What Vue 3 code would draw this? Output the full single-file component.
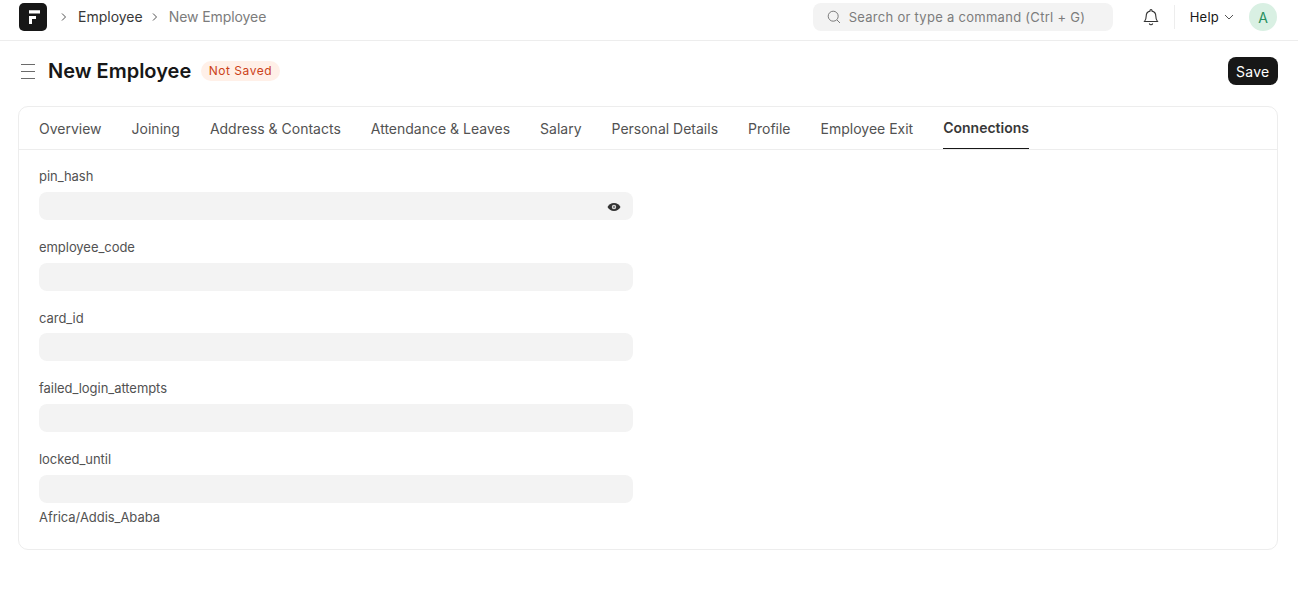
<script setup>
const tabs = ['Overview','Joining','Address & Contacts','Attendance & Leaves','Salary','Personal Details','Profile','Employee Exit','Connections']
const fields = [
  { label: 'pin_hash', eye: true },
  { label: 'employee_code' },
  { label: 'card_id' },
  { label: 'failed_login_attempts' },
  { label: 'locked_until', note: 'Africa/Addis_Ababa' },
]
</script>

<template>
  <div class="page">
    <header class="nav">
      <div class="logo">
        <svg width="16" height="16" viewBox="0 0 16 16"><path d="M4 1.300h11v3.300H4zM4 7h7v3H7v5H4z" fill="#fff"/></svg>
      </div>
      <svg class="chev first" width="8" height="10" viewBox="0 0 8 10"><path d="M2 1.500 5.500 5 2 8.500" fill="none" stroke="#525252" stroke-width="1"/></svg>
      <span class="crumb">Employee</span>
      <svg class="chev" width="8" height="10" viewBox="0 0 8 10"><path d="M2 1.500 5.500 5 2 8.500" fill="none" stroke="#525252" stroke-width="1"/></svg>
      <span class="crumb cur">New Employee</span>
      <div class="search">
        <svg width="14" height="14" viewBox="0 0 14 14"><circle cx="6.200" cy="6.200" r="5" fill="none" stroke="#7c7c7c"/><path d="m10 10 3 3" stroke="#7c7c7c"/></svg>
        <span>Search or type a command (Ctrl + G)</span>
      </div>
      <svg class="bell" width="16" height="18" viewBox="0 0 16 18"><path d="M8 1.500a1 1 0 0 1 1 1v.6c2.300.5 3.800 2.400 3.800 4.900 0 3 .7 4.300 1.700 5.500H1.500c1-1.200 1.700-2.500 1.700-5.500 0-2.500 1.500-4.400 3.800-4.900v-.6a1 1 0 0 1 1-1Z" fill="none" stroke="#333" stroke-width="1.100"/><path d="M6.300 15.500a1.800 1.800 0 0 0 3.400 0" fill="none" stroke="#333" stroke-width="1.100"/></svg>
      <div class="sep"></div>
      <span class="help">Help</span>
      <svg class="helpchev" width="10" height="6" viewBox="0 0 10 6"><path d="m1 1 4 4 4-4" fill="none" stroke="#555"/></svg>
      <div class="avatar">A</div>
    </header>

    <div class="head">
      <svg class="menu" width="16" height="16" viewBox="0 0 16 16"><path d="M1 1.500h14M1 8.500h14M1 15.500h14" stroke="#6b6b6b" stroke-width="1.200"/></svg>
      <h1>New Employee</h1>
      <span class="badge">Not Saved</span>
      <button class="save">Save</button>
    </div>

    <section class="card">
      <nav class="tabs">
        <span v-for="t in tabs" :key="t" class="tab" :class="{ on: t === 'Connections' }">{{ t }}</span>
      </nav>
      <div class="form">
        <div v-for="f in fields" :key="f.label" class="field">
          <label>{{ f.label }}</label>
          <div class="input">
            <svg v-if="f.eye" class="eye" width="14" height="14" viewBox="0 0 14 14"><path d="M7 3C4 3 1.500 5 .5 7c1 2 3.500 4 6.500 4s5.500-2 6.500-4c-1-2-3.500-4-6.500-4Z" fill="#333"/><circle cx="7" cy="7" r="2.200" fill="#ddd"/><circle cx="7" cy="7" r="1.200" fill="#888"/></svg>
          </div>
          <div v-if="f.note" class="note">{{ f.note }}</div>
        </div>
      </div>
    </section>
  </div>
</template>

<style>
html, body { margin: 0; background: #fff; }
</style>

<style scoped>
.page { width: 1298px; height: 602px; overflow: hidden; font-family: Inter, sans-serif; color: #171717; background: #fff; }
.nav { height: 34px; padding: 0 0 6px 19px; border-bottom: 1px solid #ededed; display: flex; align-items: center; box-sizing: content-box; }
.logo { width: 28px; height: 28px; border-radius: 5px; background: #171717; display: flex; align-items: center; justify-content: center; }
.chev { margin: 0 9px 0 8px; }
.chev.first { margin: 0 10px 0 13px; }
.crumb { font-size: 14px; color: #383838; padding-bottom: 1px; }
.crumb.cur { color: #7c7c7c; margin-left: 1px; letter-spacing: -.08px; }
.search { margin-left: auto; width: 300px; height: 28px; box-sizing: border-box; background: #f3f3f3; border-radius: 8px; display: flex; align-items: center; gap: 8px; padding-left: 14px; font-size: 13px; color: #7c7c7c; letter-spacing: .28px; }
.bell { margin-left: 30px; }
.sep { width: 1px; height: 24px; background: #ededed; margin-left: 15px; }
.help { font-size: 13px; margin-left: 15px; color: #171717; letter-spacing: .25px; }
.helpchev { margin-left: 5px; }
.avatar { width: 28px; height: 28px; border-radius: 50%; background: #d9f0e3; color: #278f5e; font-size: 14px; display: flex; align-items: center; justify-content: center; margin-left: 15px; margin-right: 21px; }
.head { height: 60px; display: flex; align-items: center; padding: 0 20px 0 20px; }
.menu { margin-right: 12px; }
h1 { margin: 0; font-size: 20px; font-weight: 600; line-height: 28px; }
.badge { margin-left: 10px; height: 20px; line-height: 20px; padding: 0 7.500px; border-radius: 10px; background: #fff0e8; color: #cc4218; font-size: 12px; letter-spacing: .52px; }
.save { margin-left: auto; height: 28px; padding: 0 8.500px; border: 0; border-radius: 8px; background: #171717; color: #fff; font: 14px Inter, sans-serif; letter-spacing: .25px; }
.card { margin: 5px 20px 0 18px; height: 444px; box-sizing: border-box; border: 1px solid #ededed; border-radius: 10px; }
.tabs { height: 42px; display: flex; gap: 30px; padding-left: 20px; border-bottom: 1px solid #ededed; }
.tab { font-size: 14px; line-height: 44px; color: #525252; height: 42px; box-sizing: border-box; }
.tab.on { font-weight: 600; color: #383838; line-height: 42px; border-bottom: 1px solid #171717; }
.form { padding: 18.300px 0 0 20px; width: 594px; }
.field { margin-bottom: 19px; }
label { display: block; font-size: 13px; line-height: 16px; color: #525252; margin-bottom: 7.700px; letter-spacing: -.05px; }
.input { height: 28px; background: #f3f3f3; border-radius: 8px; display: flex; align-items: center; justify-content: flex-end; padding-right: 12px; }
.eye { margin-top: 2px; }
.note { font-size: 13px; line-height: 16px; color: #525252; margin-top: 6px; letter-spacing: -.05px; }
</style>
